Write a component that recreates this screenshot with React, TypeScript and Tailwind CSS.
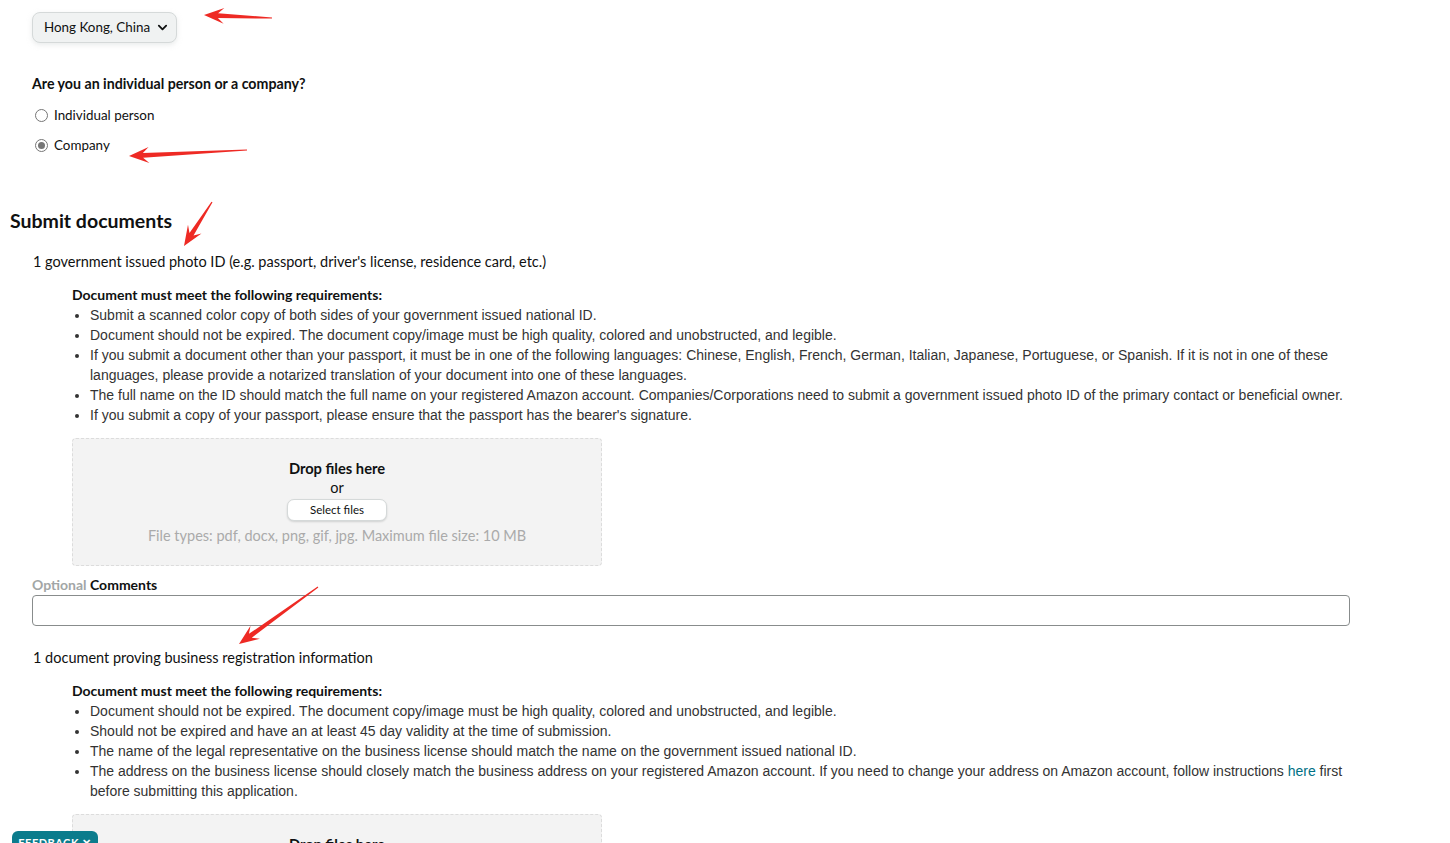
import React from 'react';

const sans = "font-['Lato','Liberation_Sans',sans-serif]";
const arial = "font-['Liberation_Sans',Arial,sans-serif]";

function Arrow({ x1, y1, x2, y2, className }: { x1: number; y1: number; x2: number; y2: number; className: string }) {
  // tapered red annotation arrow, head at (x2, y2)
  const dx = x2 - x1;
  const dy = y2 - y1;
  const len = Math.sqrt(dx * dx + dy * dy);
  const ux = dx / len;
  const uy = dy / len;
  const px = -uy;
  const py = ux;
  const headLen = 20;
  const headW = 8;
  const bx = x2 - ux * headLen;
  const by = y2 - uy * headLen;
  const nx = x2 - ux * (headLen - 6);
  const ny = y2 - uy * (headLen - 6);
  const pts = [
    [x1 + px * 0.6, y1 + py * 0.6],
    [nx + px * 2.4, ny + py * 2.4],
    [bx + px * headW, by + py * headW],
    [x2, y2],
    [bx - px * headW, by - py * headW],
    [nx - px * 2.4, ny - py * 2.4],
    [x1 - px * 0.6, y1 - py * 0.6],
  ]
    .map((p) => p.join(','))
    .join(' ');
  return (
    <svg className={className} width="1450" height="900" viewBox="0 0 1450 900">
      <polygon points={pts} fill="#ee2a24" />
    </svg>
  );
}

function Radio({ checked, label }: { checked?: boolean; label: string }) {
  return (
    <label className="flex items-center h-[20px] gap-[6px] text-[13.4px]">
      <span
        className={
          checked
            ? 'w-[13px] h-[13px] rounded-full border border-[#767676] bg-white flex items-center justify-center ml-[3px]'
            : 'w-[13px] h-[13px] rounded-full border border-[#767676] bg-white ml-[3px]'
        }
      >
        {checked && <span className="w-[7px] h-[7px] rounded-full bg-[#767676]" />}
      </span>
      <span className="text-[#0f1111]">{label}</span>
    </label>
  );
}

function DropZone() {
  return (
    <div className="ml-[72px] w-[530px] h-[128px] bg-[#f3f3f3] border border-dashed border-[#dcdcdc] rounded-[4px] flex flex-col items-center pt-[19px]">
      <div className="text-[14.7px] font-bold leading-[20px] text-[#0f1111]">Drop files here</div>
      <div className="text-[14.5px] leading-[20px] text-[#0f1111]">or</div>
      <button className="mt-[1px] h-[22px] w-[100px] bg-white border border-[#d5d9d9] rounded-[7px] text-[11.5px] text-[#0f1111] shadow-[0_1px_2px_rgba(15,17,17,0.15)]">
        Select files
      </button>
      <div className="mt-[5px] text-[14.5px] leading-[20px] text-[#aaaaaa]">
        File types: pdf, docx, png, gif, jpg. Maximum file size: 10 MB
      </div>
    </div>
  );
}

function Requirements({ items }: { items: React.ReactNode[] }) {
  return (
    <div className="ml-[72px] w-[1285px]">
      <div className={`${sans} text-[14px] font-bold leading-[20px] text-[#0f1111]`}>
        Document must meet the following requirements:
      </div>
      <ul className={`${arial} list-disc pl-[18px] text-[14px] leading-[20px] text-[#333333]`}>
        {items.map((it, i) => (
          <li key={i}>{it}</li>
        ))}
      </ul>
    </div>
  );
}

export default function App() {
  return (
    <div className={`${sans} relative min-h-screen bg-white text-[#0f1111] pb-[60px]`}>
      <div className="pl-[32px] pt-[12px]">
        <button className="h-[31px] w-[145px] flex items-center gap-[7px] pl-[11px] bg-[#f0f2f2] border border-[#d5d9d9] rounded-[8px] shadow-[0_2px_5px_rgba(213,217,217,0.5)] text-[13.4px] text-[#0f1111]">
          Hong Kong, China
          <svg width="11" height="11" viewBox="0 0 12 12">
            <path d="M2 4l4 4 4-4" fill="none" stroke="#0f1111" strokeWidth="2" strokeLinecap="round" strokeLinejoin="round" />
          </svg>
        </button>
      </div>

      <div className="pl-[32px] mt-[31px] text-[14.2px] font-bold leading-[19px]">
        Are you an individual person or a company?
      </div>
      <div className="pl-[32px] mt-[12px] flex flex-col gap-[10px]">
        <Radio label="Individual person" />
        <Radio checked label="Company" />
      </div>

      <h2 className="pl-[10px] mt-[54px] text-[19.5px] font-bold leading-[24px]">Submit documents</h2>

      <div className="pl-[33px] mt-[19px] text-[14.5px] leading-[20px]">
        1 government issued photo ID (e.g. passport, driver's license, residence card, etc.)
      </div>

      <div className="mt-[13px]">
        <Requirements
          items={[
            'Submit a scanned color copy of both sides of your government issued national ID.',
            'Document should not be expired. The document copy/image must be high quality, colored and unobstructed, and legible.',
            'If you submit a document other than your passport, it must be in one of the following languages: Chinese, English, French, German, Italian, Japanese, Portuguese, or Spanish. If it is not in one of these languages, please provide a notarized translation of your document into one of these languages.',
            'The full name on the ID should match the full name on your registered Amazon account. Companies/Corporations need to submit a government issued photo ID of the primary contact or beneficial owner.',
            "If you submit a copy of your passport, please ensure that the passport has the bearer's signature.",
          ]}
        />
      </div>

      <div className="mt-[13px]">
        <DropZone />
      </div>

      <div className="pl-[32px] mt-[10px] text-[14px] font-bold leading-[18px]">
        <span className="text-[#a2a6a6]">Optional</span> Comments
      </div>
      <div className="pl-[32px] mt-[1px]">
        <input className="block w-[1318px] h-[31px] border border-[#888c8c] rounded-[4px] bg-white outline-none" />
      </div>

      <div className="pl-[33px] mt-[22px] text-[14.5px] leading-[20px]">
        1 document proving business registration information
      </div>

      <div className="mt-[13px]">
        <Requirements
          items={[
            'Document should not be expired. The document copy/image must be high quality, colored and unobstructed, and legible.',
            'Should not be expired and have an at least 45 day validity at the time of submission.',
            'The name of the legal representative on the business license should match the name on the government issued national ID.',
            <>
              The address on the business license should closely match the business address on your registered Amazon account. If you need to change your address on Amazon account, follow instructions{' '}
              <a className="text-[#007185]">here</a> first before submitting this application.
            </>,
          ]}
        />
      </div>

      <div className="mt-[13px]">
        <DropZone />
      </div>

      <Arrow className="absolute left-0 top-0 pointer-events-none" x1={272} y1={18} x2={204} y2={15} />
      <Arrow className="absolute left-0 top-0 pointer-events-none" x1={247} y1={150} x2={129} y2={156} />
      <Arrow className="absolute left-0 top-0 pointer-events-none" x1={212} y1={202} x2={184} y2={246} />
      <Arrow className="absolute left-0 top-0 pointer-events-none" x1={318} y1={587} x2={239} y2={644} />

      <div className="fixed left-[12px] bottom-[-18px] h-[30px] w-[86px] bg-[#0b7c8c] rounded-t-[6px] text-white text-[11px] font-bold tracking-[0.5px] flex justify-center pt-[4px]">
        FEEDBACK ✕
      </div>
    </div>
  );
}
